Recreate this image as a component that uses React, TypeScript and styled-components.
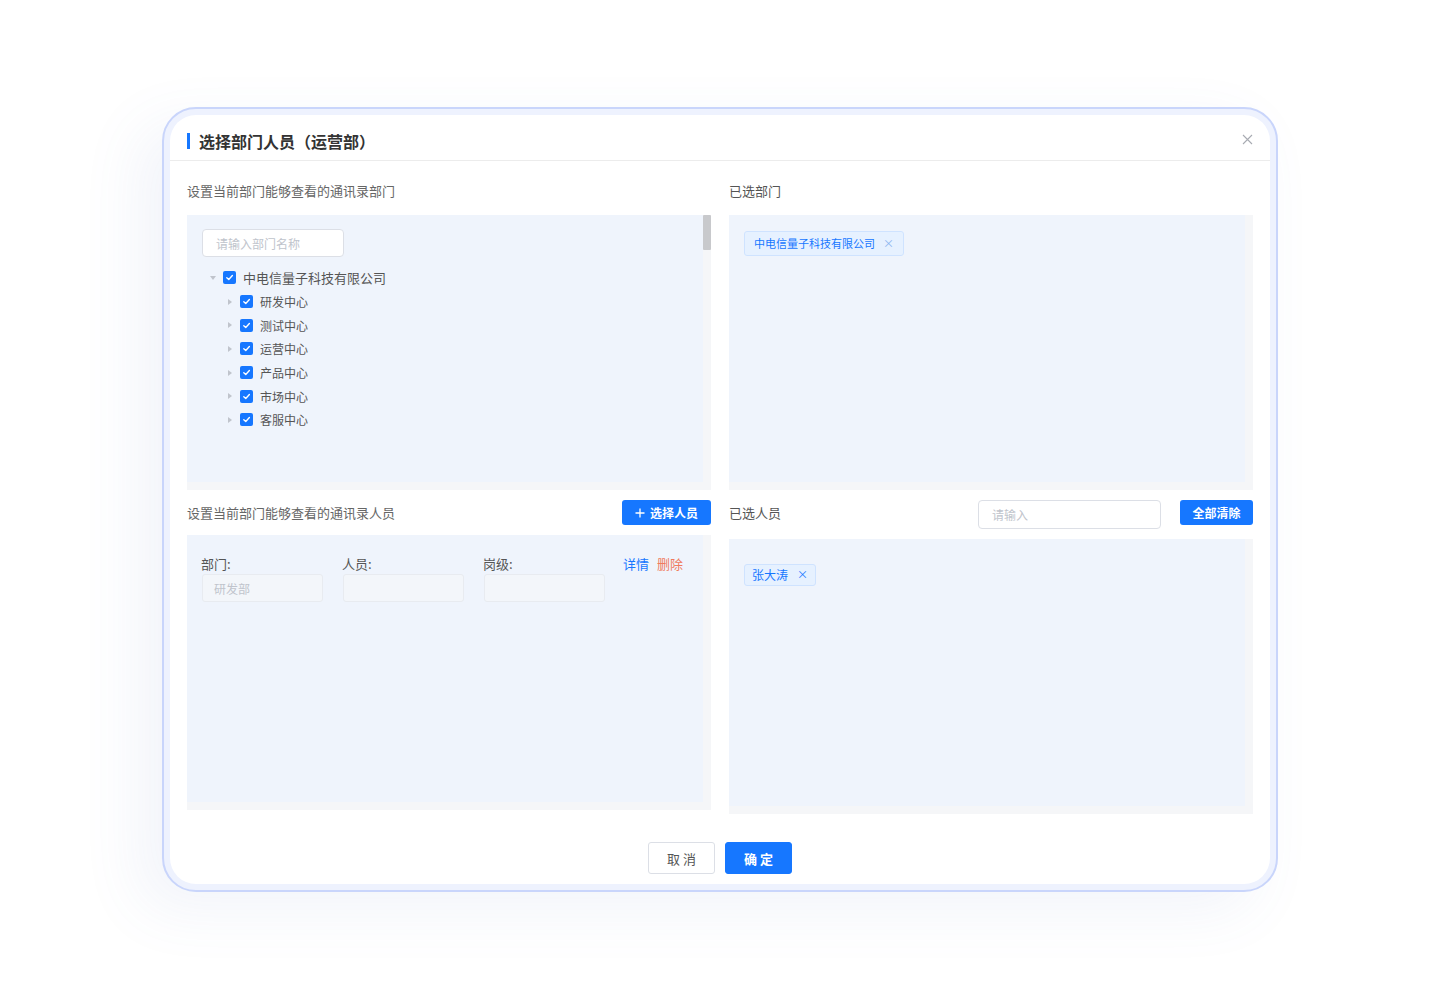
import React from 'react';
import styled, { createGlobalStyle } from 'styled-components';

const GlobalStyle = createGlobalStyle`
  html, body {
    margin: 0;
    padding: 0;
    background: #ffffff;
    font-family: "Noto Sans CJK SC", "Noto Sans", sans-serif;
    -webkit-font-smoothing: antialiased;
  }
  * { box-sizing: border-box; }
`;

const Page = styled.div`
  width: 1440px;
  height: 1000px;
  padding-top: 107px;
  display: flex;
  justify-content: center;
  align-items: flex-start;
`;

const Frame = styled.div`
  width: 1116px;
  height: 785px;
  border: 2px solid #c9d5fb;
  border-radius: 34px;
  background: #eef2fe;
  padding: 6px;
  box-shadow: -24px 18px 60px rgba(90, 110, 190, 0.08);
`;

const Dialog = styled.div`
  width: 100%;
  height: 100%;
  background: #ffffff;
  border-radius: 26px;
  display: flex;
  flex-direction: column;
  overflow: hidden;
`;

const Header = styled.div`
  height: 46px;
  flex-shrink: 0;
  padding: 0 16px 0 17px;
  display: flex;
  align-items: center;
  justify-content: space-between;
  border-bottom: 1px solid #ececec;
`;

const Title = styled.div`
  display: flex;
  align-items: center;
  gap: 9px;
  font-size: 16px;
  font-weight: 700;
  color: #333333;
  padding-top: 6px;

  &::before {
    content: '';
    width: 3px;
    height: 16px;
    background: #1677ff;
  }
`;

const CloseBtn = styled.div`
  width: 14px;
  height: 14px;
  display: flex;
  align-items: center;
  justify-content: center;
  padding-top: 4px;
`;

const Body = styled.div`
  padding: 20px 17px 0;
  display: grid;
  grid-template-columns: 524px 524px;
  column-gap: 18px;
`;

const Column = styled.div`
  display: flex;
  flex-direction: column;
`;

const SectionLabel = styled.div<{ $dark?: boolean }>`
  font-size: 13px;
  line-height: 20px;
  color: ${(p) => (p.$dark ? '#555555' : '#666666')};
`;

const TopLabelRow = styled.div`
  height: 20px;
  margin-bottom: 14px;
  display: flex;
  align-items: center;
`;

const ActionRow = styled.div`
  margin: 10px 0;
  display: flex;
  align-items: center;
  justify-content: space-between;
  gap: 18px;
`;

const Panel = styled.div<{ $thumb?: boolean; $top?: number; $left?: number }>`
  position: relative;
  height: 275px;
  background: #eff4fc;
  border-right: 8px solid #f5f6f8;
  border-bottom: 8px solid #f5f6f8;
  padding: ${(p) => p.$top ?? 14}px 15px 14px ${(p) => p.$left ?? 15}px;

  ${(p) =>
    p.$thumb &&
    `&::after {
      content: '';
      position: absolute;
      top: 0;
      right: -8px;
      width: 8px;
      height: 35px;
      background: #c8c9cc;
      border-radius: 1px;
    }`}
`;

const SearchInput = styled.div<{ $w: number; $h: number }>`
  width: ${(p) => p.$w}px;
  height: ${(p) => p.$h}px;
  background: #ffffff;
  border: 1px solid #dcdfe6;
  border-radius: 4px;
  padding: 0 13px;
  display: flex;
  align-items: center;
  font-size: 12px;
  color: #c0c4cc;
`;

const Tree = styled.div`
  margin-top: 8px;
  display: flex;
  flex-direction: column;
`;

const TreeRow = styled.div<{ $level: number }>`
  height: ${(p) => (p.$level === 0 ? 25 : 23.6)}px;
  display: flex;
  align-items: center;
  padding-left: ${(p) => (p.$level === 0 ? 7 : 24)}px;
  font-size: ${(p) => (p.$level === 0 ? 13 : 12)}px;
  color: #555555;
`;

const Caret = styled.span<{ $open?: boolean }>`
  width: 0;
  height: 0;
  ${(p) =>
    p.$open
      ? `border-left: 3.5px solid transparent;
         border-right: 3.5px solid transparent;
         border-top: 4px solid #c0c4cc;
         margin-left: 1px;
         margin-right: 7px;`
      : `border-top: 3.5px solid transparent;
         border-bottom: 3.5px solid transparent;
         border-left: 4px solid #c0c4cc;
         margin-left: 2px;
         margin-right: 8px;`}
`;

const CheckBox = styled.span`
  width: 13px;
  height: 13px;
  border-radius: 2px;
  background: #1677ff;
  display: inline-flex;
  align-items: center;
  justify-content: center;
  margin-right: 7px;
  flex-shrink: 0;
`;

const Tag = styled.div<{ $size: number }>`
  display: inline-flex;
  align-items: center;
  gap: ${(p) => (p.$size === 11 ? 8 : 9)}px;
  height: ${(p) => (p.$size === 11 ? 25 : 22)}px;
  padding: 0 ${(p) => (p.$size === 11 ? 9 : 7)}px 1px;
  background: #e6f1ff;
  border: 1px solid #cfe3ff;
  border-radius: 3px;
  font-size: ${(p) => p.$size}px;
  color: #1677ff;
  margin-top: -1px;
`;

const TagClose = styled.span<{ $dark?: boolean }>`
  font-size: 11px;
  color: ${(p) => (p.$dark ? '#1677ff' : '#8ab4f0')};
  line-height: 1;
`;

const PrimaryBtn = styled.button<{ $w: number }>`
  width: ${(p) => p.$w}px;
  height: 25px;
  border: none;
  border-radius: 3px;
  background: #1677ff;
  color: #ffffff;
  font-family: inherit;
  font-size: 12px;
  font-weight: 700;
  display: inline-flex;
  align-items: center;
  justify-content: center;
  gap: 5px;
  padding: 0;
  flex-shrink: 0;
`;

const RightTools = styled.div`
  display: flex;
  align-items: flex-start;
  gap: 19px;
`;

const FieldGrid = styled.div`
  display: grid;
  grid-template-columns: 121px 121px 121px auto;
  column-gap: 20px;
  padding-top: 6px;
`;

const Field = styled.div`
  display: flex;
  flex-direction: column;
`;

const FieldLabel = styled.div`
  font-size: 13px;
  line-height: 18px;
  color: #555555;
  margin-bottom: 1px;
  margin-left: -1px;
`;

const FieldInput = styled.div`
  height: 28px;
  background: #f3f6fa;
  border: 1px solid #e8ebf0;
  border-radius: 3px;
  padding: 0 11px;
  display: flex;
  align-items: center;
  font-size: 12px;
  color: #c0c4cc;
`;

const LinkGroup = styled.div`
  display: flex;
  gap: 8px;
  font-size: 13px;
  line-height: 18px;
  margin-left: -2px;
`;

const Link = styled.span<{ $danger?: boolean }>`
  color: ${(p) => (p.$danger ? '#f07a5c' : '#1677ff')};
`;

const Footer = styled.div`
  margin-top: 28px;
  display: flex;
  justify-content: center;
  gap: 10px;
`;

const FooterBtn = styled.button<{ $primary?: boolean }>`
  width: 67px;
  height: 32px;
  border-radius: 3px;
  font-family: inherit;
  font-size: 13px;
  letter-spacing: 3px;
  padding: 0 0 0 3px;
  border: 1px solid ${(p) => (p.$primary ? '#1677ff' : '#dcdfe6')};
  background: ${(p) => (p.$primary ? '#1677ff' : '#ffffff')};
  color: ${(p) => (p.$primary ? '#ffffff' : '#555555')};
  font-weight: ${(p) => (p.$primary ? 700 : 400)};
`;

const Check = () => (
  <svg width="9" height="9" viewBox="0 0 10 10">
    <path d="M2 5.2 L4.2 7.2 L8.2 2.8" fill="none" stroke="#fff" strokeWidth="1.5" strokeLinecap="round" strokeLinejoin="round" />
  </svg>
);

const children = ['研发中心', '测试中心', '运营中心', '产品中心', '市场中心', '客服中心'];

export default function App() {
  return (
    <>
      <GlobalStyle />
      <Page>
        <Frame>
          <Dialog>
            <Header>
              <Title>选择部门人员（运营部）</Title>
              <CloseBtn>
                <svg width="11" height="11" viewBox="0 0 11 11">
                  <path d="M1 1 L10 10 M10 1 L1 10" stroke="#a8abb2" strokeWidth="1.1" />
                </svg>
              </CloseBtn>
            </Header>
            <Body>
              <Column>
                <TopLabelRow>
                  <SectionLabel>设置当前部门能够查看的通讯录部门</SectionLabel>
                </TopLabelRow>
                <Panel $thumb>
                  <SearchInput $w={142} $h={28}>请输入部门名称</SearchInput>
                  <Tree>
                    <TreeRow $level={0}>
                      <Caret $open />
                      <CheckBox><Check /></CheckBox>
                      中电信量子科技有限公司
                    </TreeRow>
                    {children.map((c) => (
                      <TreeRow key={c} $level={1}>
                        <Caret />
                        <CheckBox><Check /></CheckBox>
                        {c}
                      </TreeRow>
                    ))}
                  </Tree>
                </Panel>
                <ActionRow>
                  <SectionLabel>设置当前部门能够查看的通讯录人员</SectionLabel>
                  <PrimaryBtn $w={89}>
                    <svg width="10" height="10" viewBox="0 0 10 10">
                      <path d="M5 0.5 V9.5 M0.5 5 H9.5" stroke="#fff" strokeWidth="1.3" />
                    </svg>
                    选择人员
                  </PrimaryBtn>
                </ActionRow>
                <Panel>
                  <FieldGrid>
                    <Field>
                      <FieldLabel>部门:</FieldLabel>
                      <FieldInput>研发部</FieldInput>
                    </Field>
                    <Field>
                      <FieldLabel>人员:</FieldLabel>
                      <FieldInput />
                    </Field>
                    <Field>
                      <FieldLabel>岗级:</FieldLabel>
                      <FieldInput />
                    </Field>
                    <LinkGroup>
                      <Link>详情</Link>
                      <Link $danger>删除</Link>
                    </LinkGroup>
                  </FieldGrid>
                </Panel>
              </Column>
              <Column>
                <TopLabelRow>
                  <SectionLabel $dark>已选部门</SectionLabel>
                </TopLabelRow>
                <Panel>
                  <Tag $size={11}>
                    中电信量子科技有限公司
                    <TagClose>×</TagClose>
                  </Tag>
                </Panel>
                <ActionRow>
                  <SectionLabel $dark style={{ marginTop: -3 }}>已选人员</SectionLabel>
                  <RightTools>
                    <SearchInput $w={183} $h={29}>请输入</SearchInput>
                    <PrimaryBtn $w={73}>全部清除</PrimaryBtn>
                  </RightTools>
                </ActionRow>
                <Panel $top={22}>
                  <Tag $size={12}>
                    张大涛
                    <TagClose $dark>×</TagClose>
                  </Tag>
                </Panel>
              </Column>
            </Body>
            <Footer>
              <FooterBtn>取消</FooterBtn>
              <FooterBtn $primary>确定</FooterBtn>
            </Footer>
          </Dialog>
        </Frame>
      </Page>
    </>
  );
}
